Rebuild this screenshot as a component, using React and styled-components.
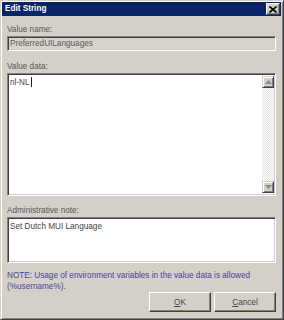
import React from "react";
import styled, { createGlobalStyle } from "styled-components";

const GlobalStyle = createGlobalStyle`
  html, body {
    margin: 0;
    padding: 0;
    background: #d4d0c8;
    overflow: hidden;
  }
`;

const FONT = `"Liberation Sans", Arial, sans-serif`;

export default function App() {
  return (
    <>
      <GlobalStyle />
      <Window>
        <TitleBar>
          <Title>Edit String</Title>
          <CloseButton aria-label="Close">
            <svg width="8" height="7" viewBox="0 0 8 7">
              <path d="M0.5 0.5 L7.5 6.5 M7.5 0.5 L0.5 6.5" stroke="#000" strokeWidth="1.6" />
            </svg>
          </CloseButton>
        </TitleBar>
        <Body>
          <Label>Value name:</Label>
          <ReadField>PreferredUILanguages</ReadField>

          <Label $gap={11}>Value data:</Label>
          <TextBox $height={123}>
            <TextContent>
              nl-NL<Caret />
            </TextContent>
            <ScrollBar>
              <ScrollButton>
                <svg viewBox="0 0 7 4" width="7" height="4">
                  <path d="M0 4 L3.5 0 L7 4 Z" fill="#8a8a8a" />
                </svg>
              </ScrollButton>
              <Track />
              <ScrollButton>
                <svg viewBox="0 0 7 4" width="7" height="4">
                  <path d="M0 0 L7 0 L3.5 4 Z" fill="#8a8a8a" />
                </svg>
              </ScrollButton>
            </ScrollBar>
          </TextBox>

          <Label $gap={10}>Administrative note:</Label>
          <TextBox $height={46}>
            <TextContent>Set Dutch MUI Language</TextContent>
          </TextBox>

          <Note>
            NOTE: Usage of environment variables in the value data is allowed
            <br />
            (%username%).
          </Note>

          <ButtonRow>
            <Button>
              <u>O</u>K
            </Button>
            <Button>
              <u>C</u>ancel
            </Button>
          </ButtonRow>
        </Body>
      </Window>
    </>
  );
}

const Window = styled.div`
  width: 284px;
  height: 320px;
  box-sizing: border-box;
  background: #d4d0c8;
  border: 1px solid;
  border-color: #d4d0c8 #404040 #404040 #d4d0c8;
  box-shadow: inset 1px 1px #fff, inset -1px -1px #808080;
  padding: 1px 2px 0 1px;
  display: flex;
  flex-direction: column;
  font-family: ${FONT};
`;

const TitleBar = styled.div`
  height: 14px;
  background: #0a246a;
  display: flex;
  align-items: center;
  justify-content: space-between;
  padding: 0 1px 0 3px;
`;

const Title = styled.span`
  color: #fff;
  font-weight: bold;
  font-size: 8.2px;
  line-height: 10px;
`;

const CloseButton = styled.div`
  width: 14px;
  height: 12px;
  box-sizing: border-box;
  background: #d4d0c8;
  border: 1px solid;
  border-color: #fff #404040 #404040 #fff;
  box-shadow: inset -1px -1px #808080;
  display: flex;
  align-items: center;
  justify-content: center;
`;

const Body = styled.div`
  display: flex;
  flex-direction: column;
  padding: 9px 5px 0 5px;
`;

const Label = styled.div`
  font-size: 8.2px;
  line-height: 10px;
  color: #555;
  margin-top: ${(p) => p.$gap || 0}px;
  margin-bottom: 1px;
`;

const sunken = `
  box-sizing: border-box;
  border: 1px solid;
  border-color: #808080 #fff #fff #808080;
  box-shadow: inset 1px 1px #404040, inset -1px -1px #d4d0c8;
`;

const ReadField = styled.div`
  ${sunken}
  height: 15px;
  background: #d6d3cd;
  padding: 1px 2px;
  font-size: 8.2px;
  line-height: 11px;
  color: #5a5a5a;
`;

const TextBox = styled.div`
  ${sunken}
  height: ${(p) => p.$height}px;
  background: #fff;
  display: flex;
  padding: 2px 1px 2px 2px;
`;

const TextContent = styled.div`
  flex: 1;
  font-size: 8.2px;
  line-height: 11px;
  color: #444;
  padding: 1px 0 0 0;
`;

const Caret = styled.span`
  display: inline-block;
  width: 1px;
  height: 10px;
  background: #222;
  vertical-align: -2px;
  margin-left: 1px;
`;

const ScrollBar = styled.div`
  width: 12px;
  display: flex;
  flex-direction: column;
`;

const ScrollButton = styled.div`
  width: 12px;
  height: 12px;
  box-sizing: border-box;
  background: #d4d0c8;
  border: 1px solid;
  border-color: #d4d0c8 #404040 #404040 #d4d0c8;
  box-shadow: inset 1px 1px #fff, inset -1px -1px #808080;
  display: flex;
  align-items: center;
  justify-content: center;
`;

const Track = styled.div`
  flex: 1;
  background: repeating-conic-gradient(#fff 0 25%, #e4e2dd 0 50%) 0 0 / 2px 2px;
`;

const Note = styled.div`
  margin-top: 7px;
  font-size: 8.2px;
  line-height: 11px;
  color: #44449c;
`;

const ButtonRow = styled.div`
  display: flex;
  justify-content: flex-end;
  gap: 3px;
`;

const Button = styled.div`
  width: 62px;
  height: 20px;
  box-sizing: border-box;
  background: #d4d0c8;
  border: 1px solid;
  border-color: #fff #404040 #404040 #fff;
  box-shadow: inset -1px -1px #808080;
  display: flex;
  align-items: center;
  justify-content: center;
  font-size: 8.2px;
  color: #444;
`;
